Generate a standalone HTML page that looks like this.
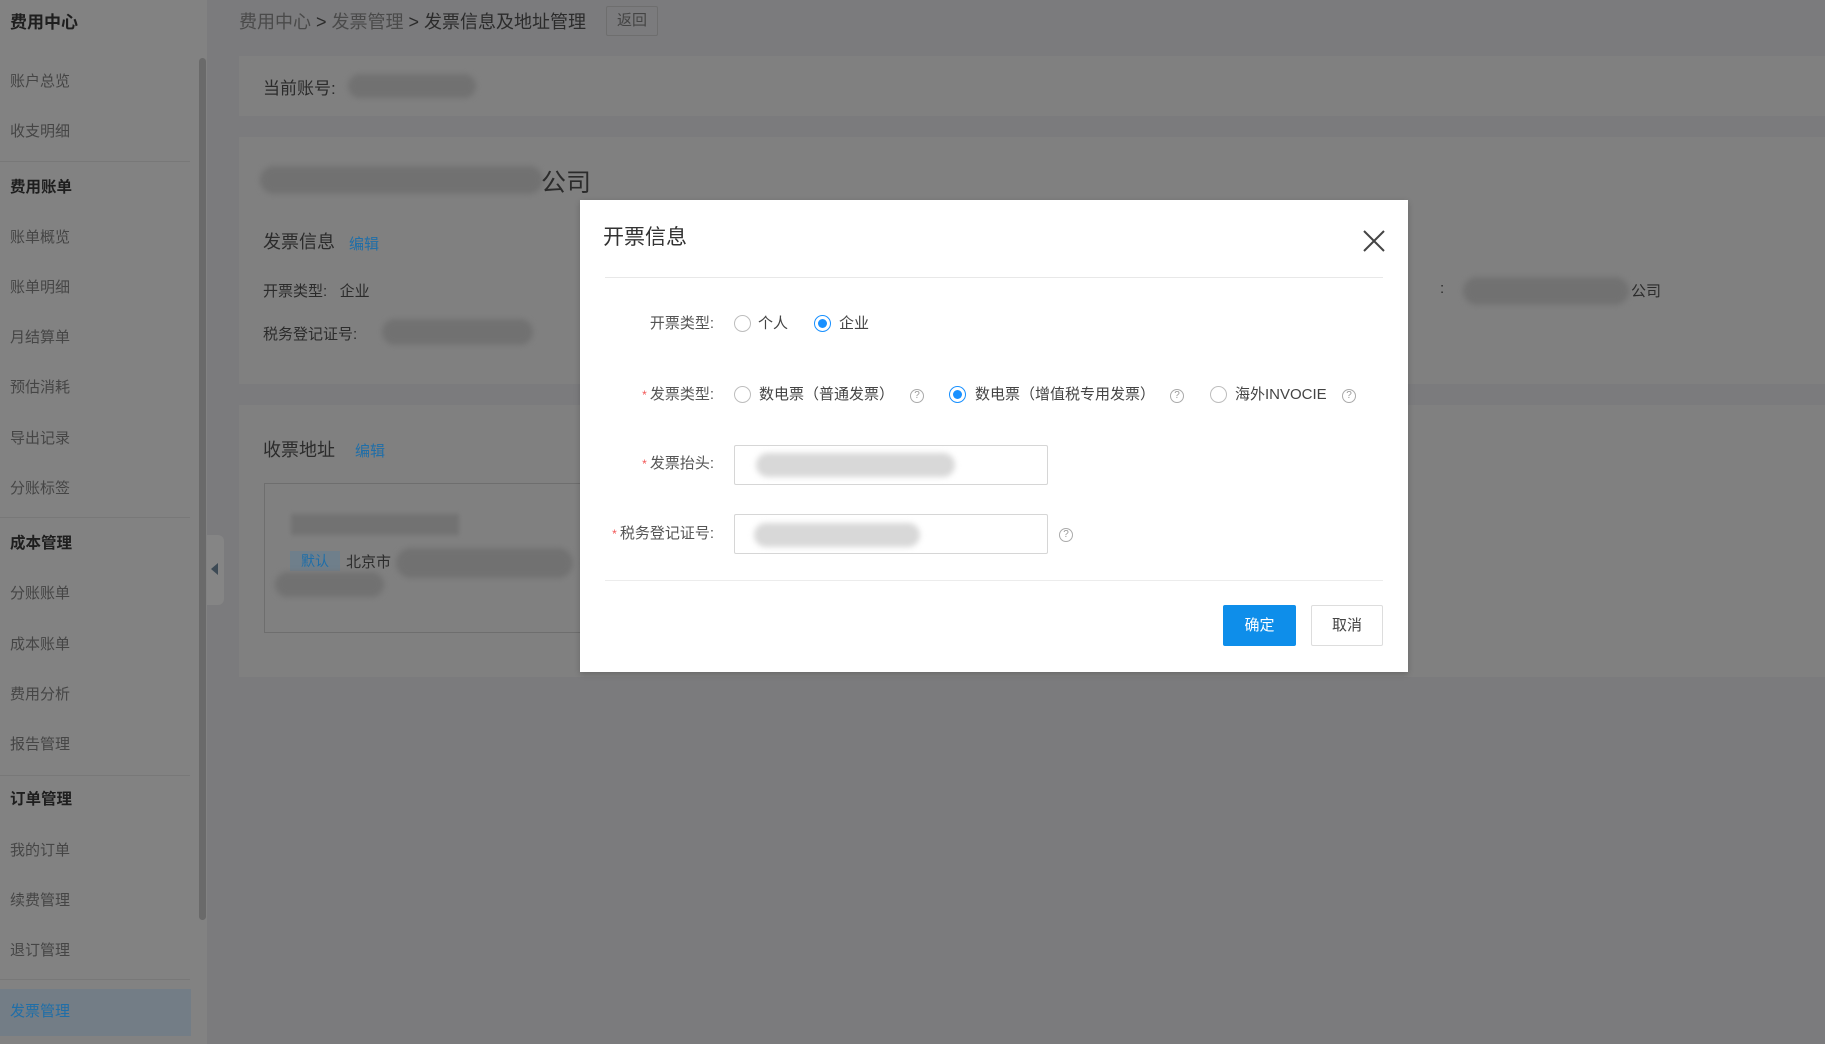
<!DOCTYPE html>
<html><head><meta charset="utf-8">
<style>
*{margin:0;padding:0;box-sizing:border-box}
body{width:1825px;height:1044px;overflow:hidden;background:#7b7b7d;font-family:"Liberation Sans","Noto Sans CJK SC",sans-serif;position:relative}
.a{position:absolute;white-space:nowrap}
.side{position:absolute;left:0;top:0;width:207px;height:1044px;background:#828282}
.si{position:absolute;left:10px;font-size:15px;color:#454545;line-height:20px;margin-top:2px}
.sb{font-weight:bold;color:#1e1e1e;font-size:15.5px}
.dv{position:absolute;left:0;width:190px;height:1px;background:#787878}
.card{position:absolute;left:239px;right:0;background:#808080}
.pill{position:absolute;border-radius:20px;background:#717171;filter:blur(3px)}
.t{color:#2b2b2b}
.blue{color:#1f6ea8}
.modal{position:absolute;left:580px;top:200px;width:828px;height:472px;background:#fff;box-shadow:0 2px 6px rgba(0,0,0,.2)}
.m{position:absolute;white-space:nowrap;font-size:15px;color:#444;line-height:20px}
.lab{position:absolute;width:134px;left:0;text-align:right;font-size:15px;color:#555;line-height:20px}
.req{color:#f25656;font-size:12px;margin-right:3px}
.r{position:absolute;width:17px;height:17px;border:1px solid #bdbdbd;border-radius:50%;background:#fff}
.r.on{border-color:#1890ff}
.r.on::after{content:"";position:absolute;left:3px;top:3px;width:9px;height:9px;border-radius:50%;background:#1890ff}
.q{position:absolute;width:14px;height:14px;border:1px solid #aaa;border-radius:50%;font-size:10px;color:#999;text-align:center;line-height:12px}
.inp{position:absolute;left:154px;width:314px;height:40px;border:1px solid #d6d6d6;border-radius:2px}
.ip{position:absolute;border-radius:14px;background:#d8d8d8;filter:blur(3px)}
</style></head><body>
<div class="side">
<div class="si sb" style="top:11px;font-size:17px">费用中心</div>
<div class="si" style="top:70px">账户总览</div>
<div class="si" style="top:120px">收支明细</div>
<div class="dv" style="top:161px"></div>
<div class="si sb" style="top:176px">费用账单</div>
<div class="si" style="top:226px">账单概览</div>
<div class="si" style="top:276px">账单明细</div>
<div class="si" style="top:326px">月结算单</div>
<div class="si" style="top:376px">预估消耗</div>
<div class="si" style="top:427px">导出记录</div>
<div class="si" style="top:477px">分账标签</div>
<div class="dv" style="top:517px"></div>
<div class="si sb" style="top:532px">成本管理</div>
<div class="si" style="top:582px">分账账单</div>
<div class="si" style="top:633px">成本账单</div>
<div class="si" style="top:683px">费用分析</div>
<div class="si" style="top:733px">报告管理</div>
<div class="dv" style="top:775px"></div>
<div class="si sb" style="top:788px">订单管理</div>
<div class="si" style="top:839px">我的订单</div>
<div class="si" style="top:889px">续费管理</div>
<div class="si" style="top:939px">退订管理</div>
<div class="dv" style="top:979px"></div>
<div style="position:absolute;left:0;top:989px;width:191px;height:47px;background:#737d86"></div>
<div class="si" style="top:1000px;color:#1f6ea8">发票管理</div>
<div style="position:absolute;left:199px;top:58px;width:7px;height:862px;border-radius:4px;background:#6a6a6a"></div>
</div>
<div style="position:absolute;left:207px;top:535px;width:17px;height:70px;background:#858585;border-radius:0 6px 6px 0"></div>
<div class="a" style="left:211px;top:563px;width:0;height:0;border-top:6px solid transparent;border-bottom:6px solid transparent;border-right:7px solid #3d4a55"></div>

<div class="a" style="left:239px;top:8px;font-size:18px;color:#4a4a4a">费用中心 <span style="color:#2b2b2b">&gt;</span> 发票管理 <span style="color:#2b2b2b">&gt; 发票信息及地址管理</span></div>
<div class="a" style="left:606px;top:6px;width:52px;height:30px;border:1px solid #6e6e6e;border-radius:2px;font-size:15px;color:#444;text-align:center;line-height:28px">返回</div>

<div class="card" style="top:56px;height:60px"></div>
<div class="a t" style="left:263px;top:74px;font-size:17px">当前账号:</div>
<div class="pill" style="left:348px;top:74px;width:128px;height:24px"></div>

<div class="card" style="top:137px;height:247px"></div>
<div class="pill" style="left:260px;top:166px;width:283px;height:28px"></div>
<div class="a t" style="left:541px;top:163px;font-size:25px">公司</div>
<div class="a t" style="left:263px;top:228px;font-size:18px">发票信息</div>
<div class="a blue" style="left:349px;top:233px;font-size:15px">编辑</div>
<div class="a t" style="left:263px;top:280px;font-size:15px">开票类型:&nbsp;&nbsp;&nbsp;企业</div>
<div class="a t" style="left:263px;top:323px;font-size:15px">税务登记证号:</div>
<div class="pill" style="left:382px;top:319px;width:151px;height:26px"></div>
<div class="a t" style="left:1440px;top:280px;font-size:15px">:</div>
<div class="pill" style="left:1463px;top:277px;width:166px;height:28px"></div>
<div class="a t" style="left:1631px;top:280px;font-size:15px">公司</div>

<div class="card" style="top:405px;height:272px"></div>
<div class="a t" style="left:263px;top:436px;font-size:18px">收票地址</div>
<div class="a blue" style="left:355px;top:440px;font-size:15px">编辑</div>
<div class="a" style="left:264px;top:483px;width:400px;height:150px;border:1px solid #6e6e6e"></div>
<div class="a" style="left:291px;top:514px;width:168px;height:21px;background:#727272;filter:blur(2px)"></div>
<div class="a" style="left:290px;top:551px;width:50px;height:20px;background:#6f7f8b;font-size:14px;color:#1f6ea8;text-align:center;line-height:20px">默认</div>
<div class="a t" style="left:346px;top:551px;font-size:15px">北京市</div>
<div class="pill" style="left:396px;top:548px;width:177px;height:30px"></div>
<div class="pill" style="left:275px;top:572px;width:109px;height:25px"></div>

<div class="modal">
<div class="m" style="left:23px;top:26px;font-size:21px;color:#333;line-height:24px">开票信息</div>
<svg class="a" style="left:783px;top:30px" width="22" height="22" viewBox="0 0 22 22"><path d="M1 1L21 21M21 1L1 21" stroke="#444" stroke-width="2" fill="none"/></svg>
<div class="a" style="left:25px;top:77px;width:778px;height:1px;background:#e8e8e8"></div>

<div class="lab" style="top:114px">开票类型:</div>
<div class="r" style="left:154px;top:115px"></div><div class="m" style="left:178px;top:114px">个人</div>
<div class="r on" style="left:234px;top:115px"></div><div class="m" style="left:259px;top:114px">企业</div>

<div class="lab" style="top:185px"><span class="req">*</span>发票类型:</div>
<div class="r" style="left:154px;top:186px"></div><div class="m" style="left:179px;top:185px">数电票（普通发票）</div>
<div class="q" style="left:330px;top:189px">?</div>
<div class="r on" style="left:369px;top:186px"></div><div class="m" style="left:395px;top:185px">数电票（增值税专用发票）</div>
<div class="q" style="left:590px;top:189px">?</div>
<div class="r" style="left:630px;top:186px"></div><div class="m" style="left:655px;top:185px">海外INVOCIE</div>
<div class="q" style="left:762px;top:189px">?</div>

<div class="lab" style="top:254px"><span class="req">*</span>发票抬头:</div>
<div class="inp" style="top:245px"></div>
<div class="ip" style="left:176px;top:253px;width:199px;height:24px"></div>

<div class="lab" style="top:324px"><span class="req">*</span>税务登记证号:</div>
<div class="inp" style="top:314px"></div>
<div class="ip" style="left:174px;top:323px;width:166px;height:24px"></div>
<div class="q" style="left:479px;top:328px">?</div>

<div class="a" style="left:25px;top:380px;width:778px;height:1px;background:#ececec"></div>
<div class="a" style="left:643px;top:405px;width:73px;height:41px;background:#0e8eea;border-radius:2px;color:#fff;font-size:15px;text-align:center;line-height:41px">确定</div>
<div class="a" style="left:731px;top:405px;width:72px;height:41px;border:1px solid #ddd;border-radius:2px;color:#444;font-size:15px;text-align:center;line-height:39px">取消</div>
</div>
</body></html>
